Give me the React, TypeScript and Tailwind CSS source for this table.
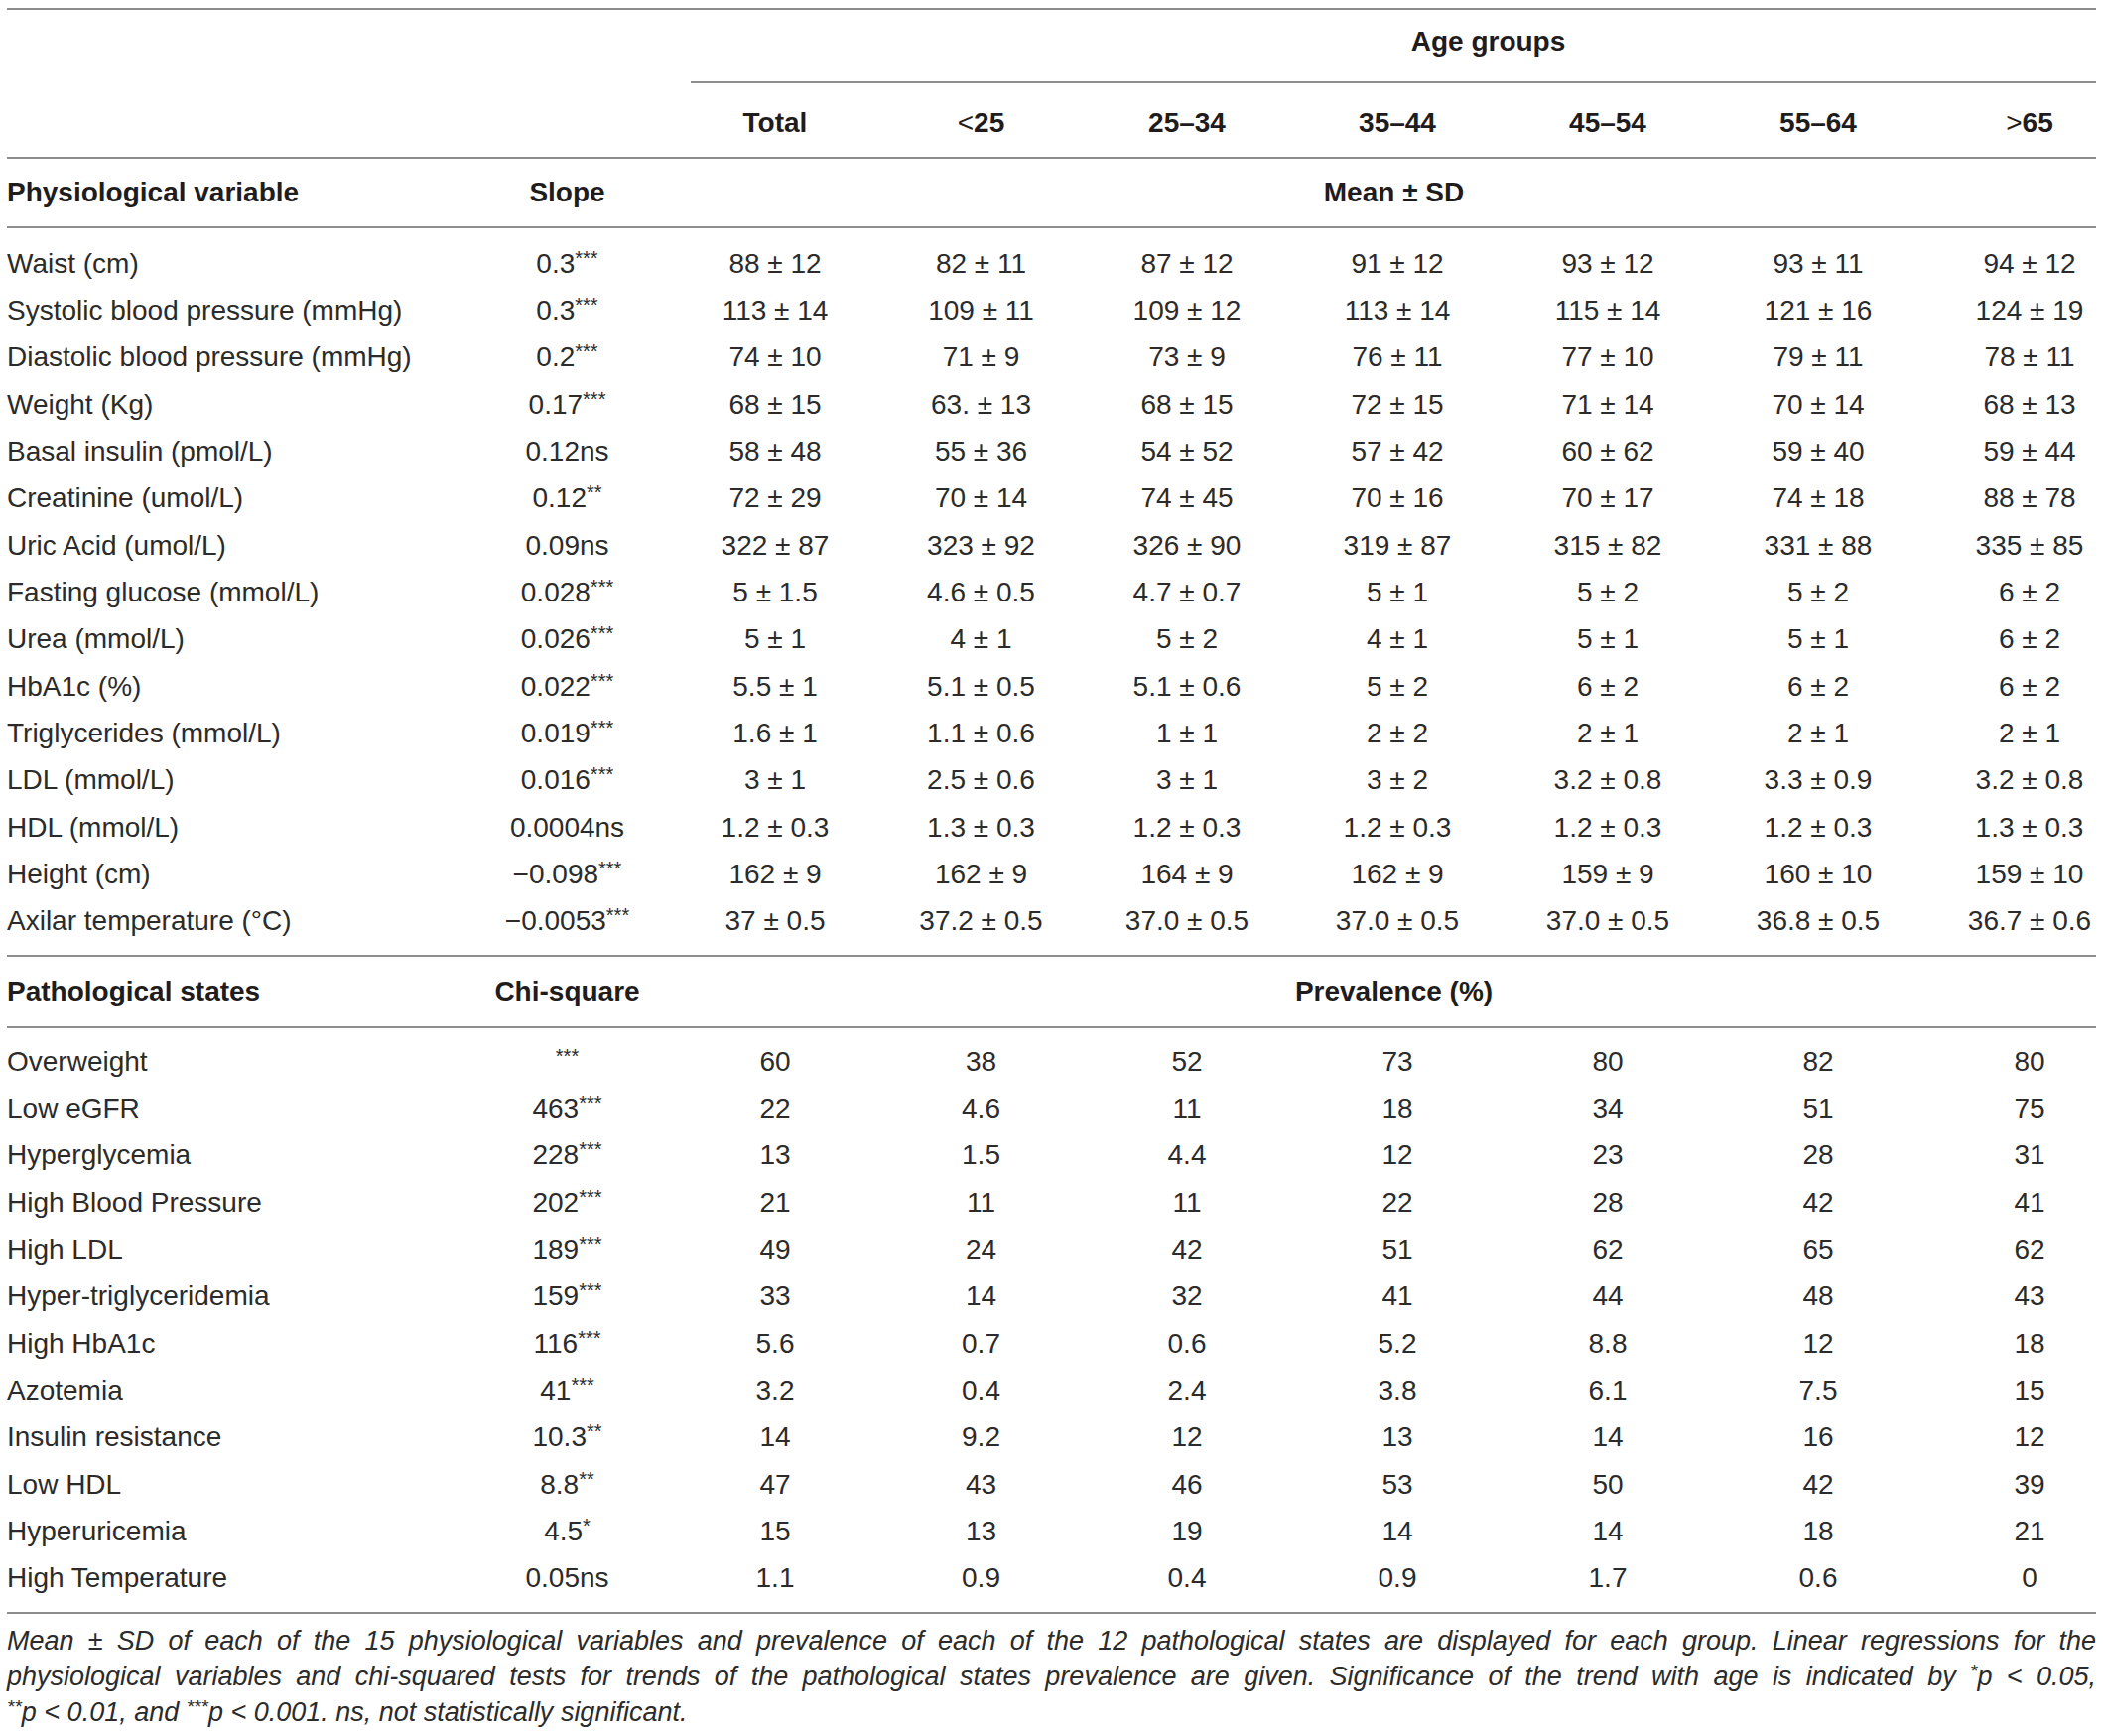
import React from "react";

const grid =
  "grid grid-cols-[461px_207px_212px_203px_212px_212px_212px_212px_174px]";

const ageHeads = ["Total", "<25", "25–34", "35–44", "45–54", "55–64", ">65"];

const physio: string[][] = [
  ["Waist (cm)", "0.3***", "88 ± 12", "82 ± 11", "87 ± 12", "91 ± 12", "93 ± 12", "93 ± 11", "94 ± 12"],
  ["Systolic blood pressure (mmHg)", "0.3***", "113 ± 14", "109 ± 11", "109 ± 12", "113 ± 14", "115 ± 14", "121 ± 16", "124 ± 19"],
  ["Diastolic blood pressure (mmHg)", "0.2***", "74 ± 10", "71 ± 9", "73 ± 9", "76 ± 11", "77 ± 10", "79 ± 11", "78 ± 11"],
  ["Weight (Kg)", "0.17***", "68 ± 15", "63. ± 13", "68 ± 15", "72 ± 15", "71 ± 14", "70 ± 14", "68 ± 13"],
  ["Basal insulin (pmol/L)", "0.12ns", "58 ± 48", "55 ± 36", "54 ± 52", "57 ± 42", "60 ± 62", "59 ± 40", "59 ± 44"],
  ["Creatinine (umol/L)", "0.12**", "72 ± 29", "70 ± 14", "74 ± 45", "70 ± 16", "70 ± 17", "74 ± 18", "88 ± 78"],
  ["Uric Acid (umol/L)", "0.09ns", "322 ± 87", "323 ± 92", "326 ± 90", "319 ± 87", "315 ± 82", "331 ± 88", "335 ± 85"],
  ["Fasting glucose (mmol/L)", "0.028***", "5 ± 1.5", "4.6 ± 0.5", "4.7 ± 0.7", "5 ± 1", "5 ± 2", "5 ± 2", "6 ± 2"],
  ["Urea (mmol/L)", "0.026***", "5 ± 1", "4 ± 1", "5 ± 2", "4 ± 1", "5 ± 1", "5 ± 1", "6 ± 2"],
  ["HbA1c (%)", "0.022***", "5.5 ± 1", "5.1 ± 0.5", "5.1 ± 0.6", "5 ± 2", "6 ± 2", "6 ± 2", "6 ± 2"],
  ["Triglycerides (mmol/L)", "0.019***", "1.6 ± 1", "1.1 ± 0.6", "1 ± 1", "2 ± 2", "2 ± 1", "2 ± 1", "2 ± 1"],
  ["LDL (mmol/L)", "0.016***", "3 ± 1", "2.5 ± 0.6", "3 ± 1", "3 ± 2", "3.2 ± 0.8", "3.3 ± 0.9", "3.2 ± 0.8"],
  ["HDL (mmol/L)", "0.0004ns", "1.2 ± 0.3", "1.3 ± 0.3", "1.2 ± 0.3", "1.2 ± 0.3", "1.2 ± 0.3", "1.2 ± 0.3", "1.3 ± 0.3"],
  ["Height (cm)", "−0.098***", "162 ± 9", "162 ± 9", "164 ± 9", "162 ± 9", "159 ± 9", "160 ± 10", "159 ± 10"],
  ["Axilar temperature (°C)", "−0.0053***", "37 ± 0.5", "37.2 ± 0.5", "37.0 ± 0.5", "37.0 ± 0.5", "37.0 ± 0.5", "36.8 ± 0.5", "36.7 ± 0.6"],
];

const patho: string[][] = [
  ["Overweight", "***", "60", "38", "52", "73", "80", "82", "80"],
  ["Low eGFR", "463***", "22", "4.6", "11", "18", "34", "51", "75"],
  ["Hyperglycemia", "228***", "13", "1.5", "4.4", "12", "23", "28", "31"],
  ["High Blood Pressure", "202***", "21", "11", "11", "22", "28", "42", "41"],
  ["High LDL", "189***", "49", "24", "42", "51", "62", "65", "62"],
  ["Hyper-triglyceridemia", "159***", "33", "14", "32", "41", "44", "48", "43"],
  ["High HbA1c", "116***", "5.6", "0.7", "0.6", "5.2", "8.8", "12", "18"],
  ["Azotemia", "41***", "3.2", "0.4", "2.4", "3.8", "6.1", "7.5", "15"],
  ["Insulin resistance", "10.3**", "14", "9.2", "12", "13", "14", "16", "12"],
  ["Low HDL", "8.8**", "47", "43", "46", "53", "50", "42", "39"],
  ["Hyperuricemia", "4.5*", "15", "13", "19", "14", "14", "18", "21"],
  ["High Temperature", "0.05ns", "1.1", "0.9", "0.4", "0.9", "1.7", "0.6", "0"],
];

function Val({ v }: { v: string }) {
  const m = v.match(/^(.*?)(\*+)$/);
  if (!m) return <>{v}</>;
  return (
    <>
      {m[1]}
      <sup className="top-[-0.4em] text-[20px]">{m[2]}</sup>
    </>
  );
}

function Rule() {
  return <div className="h-[2px] bg-[#8c8c8c]" />;
}

function DataRow({ row }: { row: string[] }) {
  return (
    <div className={`${grid} h-[47.33px] items-center leading-none`}>
      {row.map((c, i) => (
        <div
          key={i}
          className={
            i === 0
              ? "whitespace-nowrap text-left"
              : i === 8
                ? "whitespace-nowrap pl-[40px] text-center"
                : "whitespace-nowrap text-center"
          }
        >
          <Val v={c} />
        </div>
      ))}
    </div>
  );
}

function SectionHead({ left, mid, right, h }: { left: string; mid: string; right: string; h: string }) {
  return (
    <div className={`${grid} ${h} items-center font-bold text-[#1f1c1d]`}>
      <div>{left}</div>
      <div className="text-center">{mid}</div>
      <div className="col-span-7 pl-[22px] text-center">{right}</div>
    </div>
  );
}

export default function App() {
  return (
    <div className="bg-white pt-[8px] font-['Liberation_Sans',Arial,sans-serif] text-[28px] text-[#2b2b2b]">
      <div className="ml-[7px] w-[2105px]">
        <Rule />
        <div className={`${grid} h-[72px] items-center pb-[8px] font-bold text-[#1f1c1d]`}>
          <div className="col-span-3" />
          <div className="col-span-6 text-center">Age groups</div>
        </div>
        <div className={grid}>
          <div className="col-span-2" />
          <div className="col-span-7 ml-[21px] h-[2px] bg-[#8c8c8c]" />
        </div>
        <div className={`${grid} h-[74px] items-center pt-[6px] font-bold text-[#1f1c1d]`}>
          <div className="col-span-2" />
          {ageHeads.map((h, i) => (
            <div key={h} className={i === 6 ? "pl-[40px] text-center" : "text-center"}>
              {h.startsWith("<") || h.startsWith(">") ? (
                <>
                  <span className="font-normal">{h[0]}</span>
                  {h.slice(1)}
                </>
              ) : (
                h
              )}
            </div>
          ))}
        </div>
        <Rule />
        <SectionHead left="Physiological variable" mid="Slope" right="Mean ± SD" h="h-[68px]" />
        <Rule />
        <div className="pt-[12px] pb-[10px]">
          {physio.map((r) => (
            <DataRow key={r[0]} row={r} />
          ))}
        </div>
        <Rule />
        <SectionHead left="Pathological states" mid="Chi-square" right="Prevalence (%)" h="h-[70px]" />
        <Rule />
        <div className="pt-[10px] pb-[10px]">
          {patho.map((r) => (
            <DataRow key={r[0]} row={r} />
          ))}
        </div>
        <Rule />
        <div className="pt-[9px] text-[27px] italic leading-[36px] text-[#2b2b2b]">
          <p className="whitespace-nowrap text-justify [text-align-last:justify]">
            Mean ± SD of each of the 15 physiological variables and prevalence of each of the 12 pathological states are displayed for each group. Linear regressions for the
          </p>
          <p className="whitespace-nowrap text-justify [text-align-last:justify]">
            physiological variables and chi-squared tests for trends of the pathological states prevalence are given. Significance of the trend with age is indicated by{" "}
            <sup className="top-[-0.4em] text-[19px]">*</sup>p {"<"} 0.05,
          </p>
          <p className="whitespace-nowrap">
            <sup className="top-[-0.4em] text-[19px]">**</sup>p {"<"} 0.01, and <sup className="top-[-0.4em] text-[19px]">***</sup>p {"<"} 0.001. ns, not statistically significant.
          </p>
        </div>
      </div>
    </div>
  );
}
